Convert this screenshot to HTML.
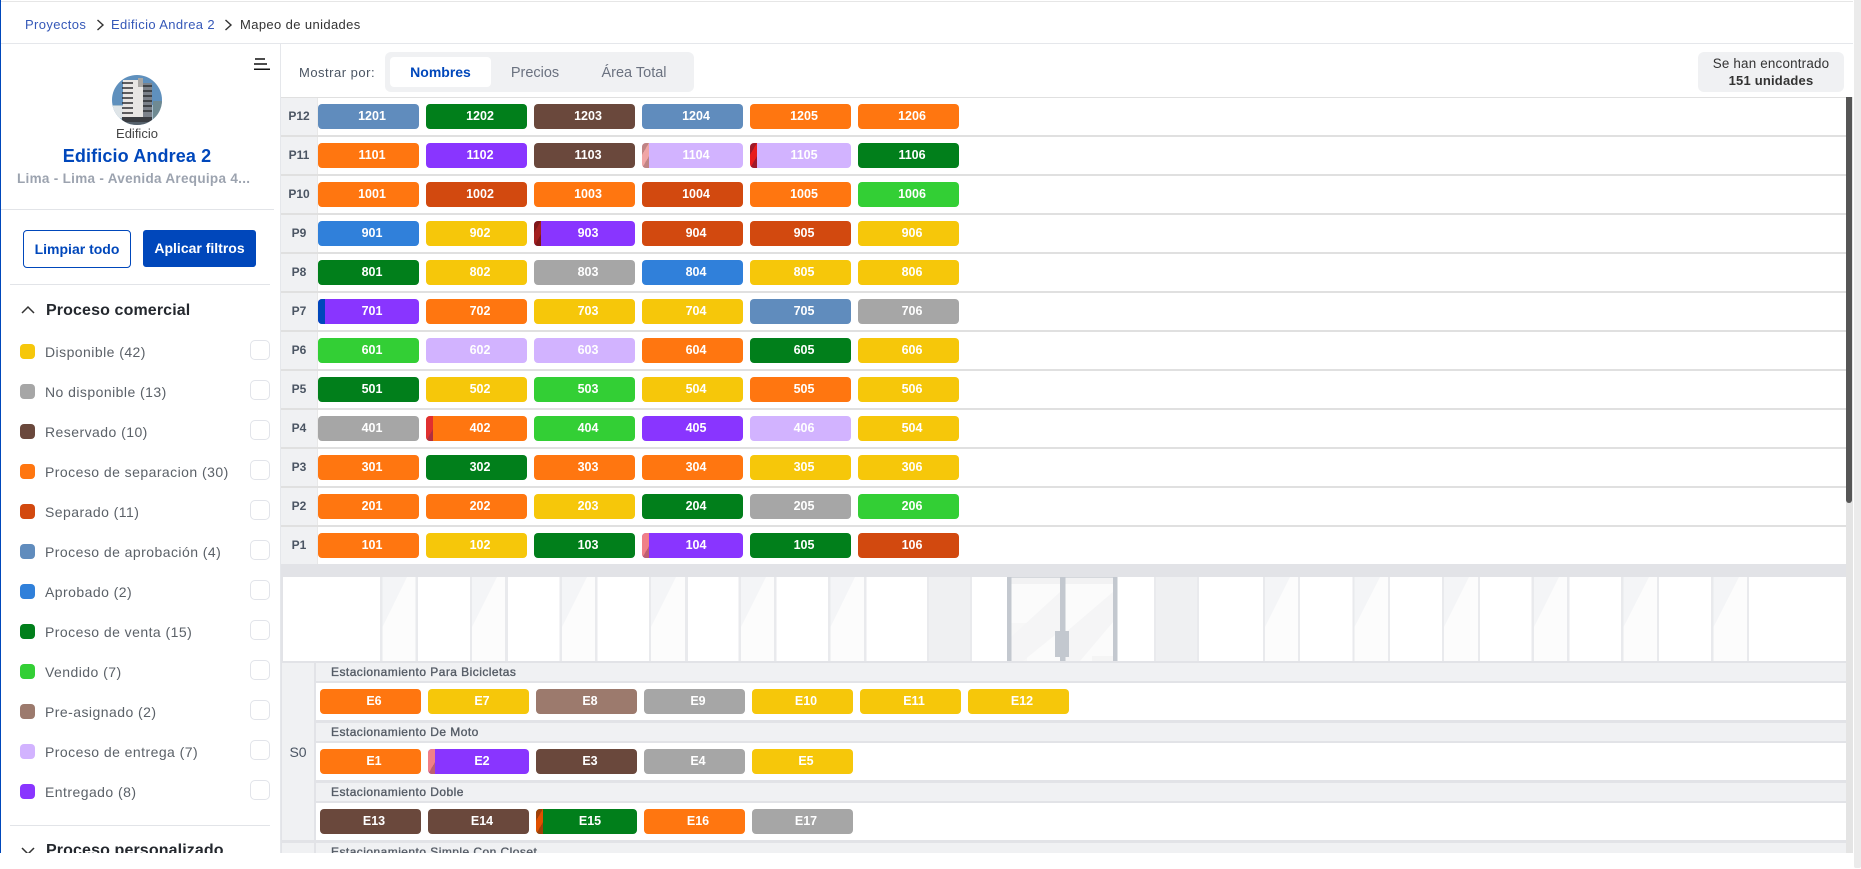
<!DOCTYPE html>
<html lang="es"><head><meta charset="utf-8"><title>Mapeo de unidades</title>
<style>
html,body{margin:0;padding:0;width:1861px;height:869px;overflow:hidden;background:#fff;font-family:"Liberation Sans",Arial,sans-serif}
#p{position:absolute;left:0;top:0;width:1861px;height:869px;overflow:hidden;background:#fff}
.a{position:absolute}
.ln{position:absolute;left:281px;width:1565px;height:2px;background:#e0e0e0}
.r{position:absolute;left:318px;display:flex;gap:7px}
.r.k{left:320px}
.c{position:relative;display:block;width:94px;height:25px;padding-left:7px;border-radius:4px;color:#fff;font-weight:bold;font-size:12.5px;line-height:25px;text-align:center;overflow:hidden;flex:none}
.c i{position:absolute;left:0;top:0;width:7px;height:25px}
.or{background:#ff7610}.do{background:#d2490f}.st{background:#608cbd}.bl{background:#3080da}.gn{background:#017f1b}.li{background:#33cf35}.ye{background:#f6c70a}.gy{background:#a6a6a6}.br{background:#6a483c}.pr{background:#9c7a6d}.la{background:#d2b3ff}.pu{background:#8935ff}
.pk{background:linear-gradient(120deg,#c08484 32%,#f0a5a5 32%,#f0a5a5 68%,#c08484 68%)}
.pk2{background:linear-gradient(120deg,#f08088 68%,#bd6070 68%)}
.rd{background:linear-gradient(120deg,#a01a2a 32%,#e81c1c 32%,#e81c1c 68%,#a01a2a 68%)}
.dr{background:linear-gradient(120deg,#801818 32%,#a32020 32%,#a32020 68%,#801818 68%)}
.rb{background:linear-gradient(120deg,#e03030 68%,#b03040 68%)}
.nb{background:#0047bb}
.eo{background:linear-gradient(120deg,#a04008 32%,#e05000 32%,#e05000 68%,#a04008 68%)}
.pl{position:absolute;left:281px;width:36px;height:37px;background:#f0f1f3;color:#4b5563;font-weight:bold;font-size:12px;line-height:37px;text-align:center}
.vb{position:absolute;left:317px;width:1px;height:37px;background:#e8e8e8}
.h{position:absolute;left:316px;width:1530px;height:18px;background:#f0f1f3;color:#555c66;font-size:12px;-webkit-text-stroke:.35px #555c66;line-height:18px;text-indent:15px;letter-spacing:.45px;white-space:nowrap;overflow:hidden}
.w{position:absolute;left:316px;width:1530px;height:37px;background:#fff}
.d{position:absolute;left:20px;width:15px;height:15px;border-radius:4px}
.t{position:absolute;left:45px;font-size:14px;line-height:20px;color:#5b6168;letter-spacing:.45px;white-space:nowrap}
.x{position:absolute;left:250px;width:18px;height:18px;border:1px solid #e2e4ea;border-radius:5px;background:#fff}
</style></head><body><div id="p">

<!-- top bar -->
<div class="a" style="left:0;top:1px;width:1853px;height:1px;background:#e6e6e6"></div>
<div class="a" style="left:25px;top:16px;font-size:13px;line-height:18px;color:#3558b8;letter-spacing:.38px;white-space:nowrap">Proyectos</div>
<svg class="a" style="left:96px;top:19px" width="9" height="12" viewBox="0 0 9 12"><path d="M1.5 1l5.5 5-5.5 5" fill="none" stroke="#333" stroke-width="1.4"/></svg>
<div class="a" style="left:111px;top:16px;font-size:13px;line-height:18px;color:#3558b8;letter-spacing:.38px;white-space:nowrap">Edificio Andrea 2</div>
<svg class="a" style="left:224px;top:19px" width="9" height="12" viewBox="0 0 9 12"><path d="M1.5 1l5.5 5-5.5 5" fill="none" stroke="#333" stroke-width="1.4"/></svg>
<div class="a" style="left:240px;top:16px;font-size:13px;line-height:18px;color:#333;letter-spacing:.38px;white-space:nowrap">Mapeo de unidades</div>
<div class="a" style="left:1px;top:43px;width:1852px;height:1px;background:#e5e7eb"></div>

<!-- sidebar -->
<div class="a" style="left:0;top:0;width:1px;height:853px;background:#0047bb"></div>
<div class="a" style="left:280px;top:44px;width:1px;height:809px;background:#e5e7eb"></div>
<svg class="a" style="left:254px;top:57px" width="16" height="14" viewBox="0 0 16 14"><path d="M1 2h10M0 7h13M0 12.3h16" stroke="#111" stroke-width="1.5"/></svg>
<svg class="a" style="left:112px;top:75px" width="50" height="50" viewBox="0 0 50 50"><defs><clipPath id="cp"><circle cx="25" cy="25" r="25"/></clipPath></defs><g clip-path="url(#cp)"><rect width="50" height="50" fill="#5f90bd"/><rect y="30" width="50" height="20" fill="#a5bdcc"/><rect x="1" y="31" width="10" height="12" fill="#dfe5e8"/><rect x="41" y="26" width="9" height="18" fill="#6f8a92"/><rect x="11" y="5" width="20" height="38" fill="#e8e6e4"/><rect x="26" y="3" width="5" height="9" fill="#a9a7a4"/><rect x="31" y="8" width="9" height="35" fill="#7c828a"/><path d="M10 8h11M10 13h11M10 18h11M10 23h11M10 28h11M10 33h11M10 38h11M31 11h9M31 16h9M31 21h9M31 26h9M31 31h9M31 36h9" stroke="#2d2f33" stroke-width="1.4"/><rect x="10" y="42" width="30" height="5" fill="#3a3d42"/><rect y="47" width="50" height="3" fill="#55606a"/></g></svg>
<div class="a" style="left:0;top:126px;width:274px;text-align:center;font-size:13px;line-height:16px;color:#444">Edificio</div>
<div class="a" style="left:0;top:145px;width:274px;text-align:center;font-size:18px;line-height:22px;font-weight:bold;color:#0047bb;letter-spacing:.12px">Edificio Andrea 2</div>
<div class="a" style="left:17px;top:170px;font-size:13.5px;line-height:18px;font-weight:bold;color:#9ca3af;letter-spacing:.3px;white-space:nowrap">Lima - Lima - Avenida Arequipa 4...</div>
<div class="a" style="left:1px;top:209px;width:273px;height:1px;background:#e2e4e8"></div>
<div class="a" style="left:23px;top:230px;width:106px;height:36px;border:1px solid #0047bb;border-radius:4px;text-align:center;font-size:14px;line-height:36px;font-weight:bold;color:#0047bb">Limpiar todo</div>
<div class="a" style="left:143px;top:230px;width:113px;height:37px;background:#0047bb;border-radius:3px;text-align:center;font-size:14px;line-height:37px;font-weight:bold;color:#fff">Aplicar filtros</div>
<div class="a" style="left:10px;top:284px;width:260px;height:1px;background:#e2e4e8"></div>

<svg class="a" style="left:21px;top:305px" width="14" height="10" viewBox="0 0 14 10"><path d="M1 8l6-6 6 6" fill="none" stroke="#333" stroke-width="1.5"/></svg>
<div class="a" style="left:46px;top:301px;font-size:16px;line-height:20px;font-weight:bold;color:#24282e;white-space:nowrap;letter-spacing:.12px">Proceso comercial</div>

<div class="d" style="top:344px;background:#f6c70a"></div><div class="t" style="top:342px">Disponible (42)</div><div class="x" style="top:340px"></div>
<div class="d" style="top:384px;background:#a6a6a6"></div><div class="t" style="top:382px">No disponible (13)</div><div class="x" style="top:380px"></div>
<div class="d" style="top:424px;background:#6a483c"></div><div class="t" style="top:422px">Reservado (10)</div><div class="x" style="top:420px"></div>
<div class="d" style="top:464px;background:#ff7610"></div><div class="t" style="top:462px">Proceso de separacion (30)</div><div class="x" style="top:460px"></div>
<div class="d" style="top:504px;background:#d2490f"></div><div class="t" style="top:502px">Separado (11)</div><div class="x" style="top:500px"></div>
<div class="d" style="top:544px;background:#608cbd"></div><div class="t" style="top:542px">Proceso de aprobación (4)</div><div class="x" style="top:540px"></div>
<div class="d" style="top:584px;background:#3080da"></div><div class="t" style="top:582px">Aprobado (2)</div><div class="x" style="top:580px"></div>
<div class="d" style="top:624px;background:#017f1b"></div><div class="t" style="top:622px">Proceso de venta (15)</div><div class="x" style="top:620px"></div>
<div class="d" style="top:664px;background:#33cf35"></div><div class="t" style="top:662px">Vendido (7)</div><div class="x" style="top:660px"></div>
<div class="d" style="top:704px;background:#9c7a6d"></div><div class="t" style="top:702px">Pre-asignado (2)</div><div class="x" style="top:700px"></div>
<div class="d" style="top:744px;background:#d2b3ff"></div><div class="t" style="top:742px">Proceso de entrega (7)</div><div class="x" style="top:740px"></div>
<div class="d" style="top:784px;background:#8935ff"></div><div class="t" style="top:782px">Entregado (8)</div><div class="x" style="top:780px"></div>
<div class="a" style="left:10px;top:825px;width:260px;height:1px;background:#e2e4e8"></div>
<div class="a" style="left:1px;top:826px;width:279px;height:27px;overflow:hidden">
<svg class="a" style="left:20px;top:20px" width="14" height="10" viewBox="0 0 14 10"><path d="M1 2l6 6 6-6" fill="none" stroke="#333" stroke-width="1.5"/></svg>
<div class="a" style="left:45px;top:15px;font-size:16px;line-height:20px;font-weight:bold;color:#24282e;white-space:nowrap;letter-spacing:.12px">Proceso personalizado</div>
</div>

<!-- controls -->
<div class="a" style="left:299px;top:64px;font-size:13px;line-height:18px;color:#4b5563;letter-spacing:.5px;white-space:nowrap">Mostrar por:</div>
<div class="a" style="left:385px;top:52px;width:309px;height:40px;background:#f0f1f3;border-radius:6px"></div>
<div class="a" style="left:390px;top:57px;width:101px;height:30px;background:#fff;border-radius:4px;text-align:center;font-size:14px;line-height:30px;font-weight:bold;color:#0047bb">Nombres</div>
<div class="a" style="left:490px;top:58px;width:90px;text-align:center;font-size:14.5px;line-height:30px;color:#6b7280">Precios</div>
<div class="a" style="left:584px;top:58px;width:100px;text-align:center;font-size:14.5px;line-height:30px;color:#6b7280">Área Total</div>
<div class="a" style="left:1698px;top:52px;width:146px;height:40px;background:#f0f1f3;border-radius:6px;text-align:center;color:#333;font-size:13.4px;line-height:16px"><div style="padding-top:4px;letter-spacing:.2px">Se han encontrado</div><div style="font-weight:bold;font-size:13px;letter-spacing:.2px;margin-top:1px">151 unidades</div></div>

<!-- grid lines -->
<div class="a" style="left:281px;top:97px;width:1565px;height:1px;background:#e0e0e0"></div>
<div class="ln" style="top:135px"></div><div class="ln" style="top:174px"></div><div class="ln" style="top:213px"></div><div class="ln" style="top:252px"></div><div class="ln" style="top:291px"></div><div class="ln" style="top:330px"></div><div class="ln" style="top:369px"></div><div class="ln" style="top:408px"></div><div class="ln" style="top:447px"></div><div class="ln" style="top:486px"></div><div class="ln" style="top:525px"></div>

<div class="pl" style="top:98px">P12</div><div class="vb" style="top:98px"></div>
<div class="pl" style="top:137px">P11</div><div class="vb" style="top:137px"></div>
<div class="pl" style="top:176px">P10</div><div class="vb" style="top:176px"></div>
<div class="pl" style="top:215px">P9</div><div class="vb" style="top:215px"></div>
<div class="pl" style="top:254px">P8</div><div class="vb" style="top:254px"></div>
<div class="pl" style="top:293px">P7</div><div class="vb" style="top:293px"></div>
<div class="pl" style="top:332px">P6</div><div class="vb" style="top:332px"></div>
<div class="pl" style="top:371px">P5</div><div class="vb" style="top:371px"></div>
<div class="pl" style="top:410px">P4</div><div class="vb" style="top:410px"></div>
<div class="pl" style="top:449px">P3</div><div class="vb" style="top:449px"></div>
<div class="pl" style="top:488px">P2</div><div class="vb" style="top:488px"></div>
<div class="pl" style="top:527px">P1</div><div class="vb" style="top:527px"></div>

<div class="r" style="top:104px"><b class="c st">1201</b><b class="c gn">1202</b><b class="c br">1203</b><b class="c st">1204</b><b class="c or">1205</b><b class="c or">1206</b></div>
<div class="r" style="top:143px"><b class="c or">1101</b><b class="c pu">1102</b><b class="c br">1103</b><b class="c la"><i class="pk"></i>1104</b><b class="c la"><i class="rd"></i>1105</b><b class="c gn">1106</b></div>
<div class="r" style="top:182px"><b class="c or">1001</b><b class="c do">1002</b><b class="c or">1003</b><b class="c do">1004</b><b class="c or">1005</b><b class="c li">1006</b></div>
<div class="r" style="top:221px"><b class="c bl">901</b><b class="c ye">902</b><b class="c pu"><i class="dr"></i>903</b><b class="c do">904</b><b class="c do">905</b><b class="c ye">906</b></div>
<div class="r" style="top:260px"><b class="c gn">801</b><b class="c ye">802</b><b class="c gy">803</b><b class="c bl">804</b><b class="c ye">805</b><b class="c ye">806</b></div>
<div class="r" style="top:299px"><b class="c pu"><i class="nb"></i>701</b><b class="c or">702</b><b class="c ye">703</b><b class="c ye">704</b><b class="c st">705</b><b class="c gy">706</b></div>
<div class="r" style="top:338px"><b class="c li">601</b><b class="c la">602</b><b class="c la">603</b><b class="c or">604</b><b class="c gn">605</b><b class="c ye">606</b></div>
<div class="r" style="top:377px"><b class="c gn">501</b><b class="c ye">502</b><b class="c li">503</b><b class="c ye">504</b><b class="c or">505</b><b class="c ye">506</b></div>
<div class="r" style="top:416px"><b class="c gy">401</b><b class="c or"><i class="rb"></i>402</b><b class="c li">404</b><b class="c pu">405</b><b class="c la">406</b><b class="c ye">504</b></div>
<div class="r" style="top:455px"><b class="c or">301</b><b class="c gn">302</b><b class="c or">303</b><b class="c or">304</b><b class="c ye">305</b><b class="c ye">306</b></div>
<div class="r" style="top:494px"><b class="c or">201</b><b class="c or">202</b><b class="c ye">203</b><b class="c gn">204</b><b class="c gy">205</b><b class="c li">206</b></div>
<div class="r" style="top:533px"><b class="c or">101</b><b class="c ye">102</b><b class="c gn">103</b><b class="c pu"><i class="pk2"></i>104</b><b class="c gn">105</b><b class="c do">106</b></div>

<!-- lower area -->
<div class="a" style="left:281px;top:564px;width:1565px;height:289px;background:#e2e3e7"></div>
<svg class="a" style="left:283px;top:577px" width="1563" height="84" viewBox="283 577 1563 84">
<rect x="283" y="577" width="1563" height="84" fill="#fff"/>
<g fill="#e9eaed">
<rect x="380" y="577" width="38" height="84"/><rect x="470" y="577" width="38" height="84"/><rect x="559.5" y="577" width="38" height="84"/><rect x="649" y="577" width="39" height="84"/><rect x="738.5" y="577" width="38" height="84"/><rect x="828" y="577" width="38.500" height="84"/>
<rect x="927" y="577" width="45" height="84"/><rect x="1154" y="577" width="45" height="84"/>
<rect x="1263" y="577" width="37" height="84"/><rect x="1352.500" y="577" width="37.500" height="84"/><rect x="1442" y="577" width="38" height="84"/><rect x="1531.500" y="577" width="38" height="84"/><rect x="1621" y="577" width="38" height="84"/><rect x="1711" y="577" width="38" height="84"/>
</g>
<g fill="#fcfcfc">
<rect x="382.500" y="577" width="33" height="84"/><rect x="472" y="577" width="33" height="84"/><rect x="562" y="577" width="33" height="84"/><rect x="651" y="577" width="34" height="84"/><rect x="741" y="577" width="33" height="84"/><rect x="830.500" y="577" width="33.500" height="84"/>
<rect x="1265" y="577" width="33" height="84"/><rect x="1354.500" y="577" width="33.500" height="84"/><rect x="1444" y="577" width="34" height="84"/><rect x="1534" y="577" width="33" height="84"/><rect x="1623.500" y="577" width="33.500" height="84"/><rect x="1713.500" y="577" width="33.500" height="84"/>
</g>
<g fill="#f4f5f7">
<polygon points="382.500,577 407,577 382.500,627"/><polygon points="472,577 497,577 472,627"/><polygon points="562,577 587,577 562,627"/><polygon points="651,577 676,577 651,627"/><polygon points="741,577 766,577 741,627"/><polygon points="830.500,577 855,577 830.500,627"/>
<polygon points="1265,577 1290,577 1265,627"/><polygon points="1354.500,577 1380,577 1354.500,627"/><polygon points="1444,577 1469,577 1444,627"/><polygon points="1534,577 1559,577 1534,627"/><polygon points="1623.500,577 1649,577 1623.500,627"/><polygon points="1713.500,577 1739,577 1713.500,627"/>
</g>
<g fill="#eff0f2"><rect x="929" y="577" width="41" height="84"/><rect x="1156" y="577" width="41" height="84"/></g>
<rect x="1011" y="577" width="102" height="84" fill="#fbfbfb"/>
<rect x="1011" y="577" width="102" height="7" fill="#f2f2f3"/>
<rect x="1011" y="623" width="16" height="38" fill="#f7f7f7"/>
<rect x="1092" y="656" width="21" height="5" fill="#f5f5f5"/>
<polygon points="1011,637 1060,592 1060,631 1023,661 1011,661" fill="#f5f5f6"/>
<polygon points="1065,633 1113,592 1113,622 1080,661 1065,661" fill="#f5f5f6"/>
<rect x="1011" y="577" width="102" height="1" fill="#d5d8dc"/>
<g fill="#c3c8cf">
<rect x="1007" y="577" width="4.500" height="84"/><rect x="1060" y="577" width="5.500" height="84"/><rect x="1113" y="577" width="4.500" height="84"/><rect x="1055" y="631" width="14" height="26"/>
</g>
</svg>

<div class="a" style="left:282px;top:663px;width:32px;height:177px;background:#f0f1f3;text-align:center;font-size:14px;line-height:178px;color:#4b5563">S0</div>
<div class="a" style="left:282px;top:843px;width:32px;height:10px;background:#f0f1f3"></div>

<div class="h" style="top:663px">Estacionamiento Para Bicicletas</div><div class="w" style="top:683px"></div>
<div class="h" style="top:723px">Estacionamiento De Moto</div><div class="w" style="top:743px"></div>
<div class="h" style="top:783px">Estacionamiento Doble</div><div class="w" style="top:803px"></div>
<div class="h" style="top:843px;height:10px">Estacionamiento Simple Con Closet</div>

<div class="r k" style="top:689px"><b class="c or">E6</b><b class="c ye">E7</b><b class="c pr">E8</b><b class="c gy">E9</b><b class="c ye">E10</b><b class="c ye">E11</b><b class="c ye">E12</b></div>
<div class="r k" style="top:749px"><b class="c or">E1</b><b class="c pu"><i class="pk2"></i>E2</b><b class="c br">E3</b><b class="c gy">E4</b><b class="c ye">E5</b></div>
<div class="r k" style="top:809px"><b class="c br">E13</b><b class="c br">E14</b><b class="c gn"><i class="eo"></i>E15</b><b class="c or">E16</b><b class="c gy">E17</b></div>

<!-- scrollbars -->
<div class="a" style="left:1846px;top:97px;width:7px;height:756px;background:#e4e4e4"></div>
<div class="a" style="left:1846px;top:97px;width:6px;height:406px;background:#555;border-radius:0 0 3px 3px"></div>
<div class="a" style="left:1854px;top:0;width:7px;height:868px;background:#ebebeb;border-radius:0 0 2px 2px"></div>
</div></body></html>
